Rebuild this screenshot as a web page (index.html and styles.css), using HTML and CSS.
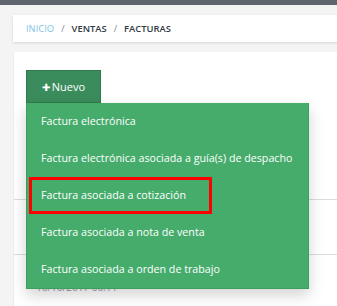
FILE: index.html
```html
<!DOCTYPE html>
<html lang="es">
<head>
    <meta charset="UTF-8">
    <title>Facturas</title>
    <link rel="stylesheet" href="styles.css">
</head>
<body>
    <div class="topbar"></div>
    <div class="page">
        <nav class="breadcrumb">
            <a href="#" class="crumb-link">Inicio</a>
            <span class="sep">/</span>
            <span class="crumb">Ventas</span>
            <span class="sep">/</span>
            <span class="crumb">Facturas</span>
        </nav>

        <div class="card">
            <div class="dropdown">
                <button type="button" class="btn-new"><span class="plus">✚</span>Nuevo</button>
                <ul class="menu">
                    <li>Factura electrónica</li>
                    <li>Factura electrónica asociada a guía(s) de despacho</li>
                    <li class="marked">Factura asociada a cotización</li>
                    <li>Factura asociada a nota de venta</li>
                    <li>Factura asociada a orden de trabajo</li>
                </ul>
            </div>

            <!-- table rows behind the menu -->
            <div class="rows">
                <div class="row"></div>
                <div class="row"></div>
                <div class="row row-last"><span class="date">10/10/2017 00:11</span></div>
            </div>
        </div>
    </div>
</body>
</html>
```

FILE: styles.css
```css
* {
    box-sizing: border-box;
    font-family: 'Open Sans', 'Liberation Sans', sans-serif;
}

body {
    margin: 0;
    background: #f4f4f4;
    width: 337px;
    height: 306px;
    overflow: hidden;
}

.topbar {
    height: 5px;
    background: #5f656d;
}

.page {
    padding: 10px 0 0 13px;
}

.breadcrumb {
    background: white;
    height: 27px;
    display: flex;
    align-items: center;
    padding-left: 13px;
    font-size: 9.4px;
    font-weight: 600;
    text-transform: uppercase;
    box-shadow: 0 1px 3px rgba(0,0,0,0.12);
    margin-right: -10px;
}

.crumb-link {
    color: #7fc4e4;
    font-weight: 400;
    text-decoration: none;
}

.crumb {
    color: #333a44;
}

.sep {
    color: #888;
    font-weight: 400;
    margin: 0 7px;
}

.card {
    background: white;
    margin-top: 10px;
    height: 254px;
    padding-top: 18px;
    position: relative;
    overflow: hidden;
    border-left: 1px solid #ececec;
}

.dropdown {
    position: relative;
    margin-left: 12px;
    z-index: 2;
}

.btn-new {
    background: #3b8c5c;
    border: 1px solid #2f7a4c;
    color: white;
    width: 75px;
    height: 33px;
    font-size: 11px;
    padding: 0;
    display: flex;
    align-items: center;
    justify-content: center;
    cursor: pointer;
}

.plus {
    font-size: 10px;
    margin-right: 2px;
}

.menu {
    list-style: none;
    margin: 0;
    padding: 0;
    background: #45ac6b;
    width: 283px;
    border: 1px solid #3e9d61;
    border-top: none;
    box-shadow: 0 6px 14px rgba(0,0,0,0.18);
}

.menu li {
    color: white;
    font-size: 10.7px;
    height: 37px;
    line-height: 37px;
    padding-left: 14px;
    white-space: nowrap;
}

.menu li.marked {
    margin-left: 2px;
    width: 183px;
    border: 3px solid #f00;
    line-height: 31px;
    padding-left: 9px;
}

.rows {
    position: absolute;
    top: 0;
    left: 0;
    right: 0;
    padding-top: 93px;
}

.row {
    height: 55px;
    border-bottom: 1px solid #dcdcdc;
}

.row-last {
    border-bottom: none;
    padding: 25px 0 0 22px;
    font-size: 10px;
    color: #999;
}
```
